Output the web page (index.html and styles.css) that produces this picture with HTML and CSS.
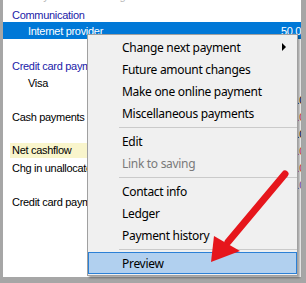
FILE: index.html
```html
<!DOCTYPE html>
<html lang="en">
<head>
  <meta charset="UTF-8">
  <title>Budget context menu</title>
  <link rel="stylesheet" href="styles.css">
</head>
<body>

<div class="frame">
  <div class="list">
    <div class="row cut"><span class="label">Monthly household budget</span></div>
    <div class="row group"><span class="label">Communication</span></div>
    <div class="row sub selected"><span class="label">Internet provider</span><span class="amt">50.00</span></div>
    <div class="row"></div>
    <div class="row group"><span class="label">Credit card payments</span></div>
    <div class="row sub"><span class="label">Visa</span></div>
    <div class="row"><span class="label"></span><span class="amt">1,200.00</span></div>
    <div class="row"><span class="label">Cash payments and withdrawals</span><span class="amt neg">-340.00</span></div>
    <div class="row"><span class="label"></span><span class="amt">310.00</span></div>
    <div class="row"><span class="label total">Net cashflow</span><span class="amt neg">-85.00</span></div>
    <div class="row"><span class="label">Chg in unallocated funds</span><span class="amt neg">-12.00</span></div>
    <div class="row"><span class="label"></span><span class="amt other">0.00</span></div>
    <div class="row"><span class="label">Credit card payments due</span></div>
    <div class="row"></div>
    <div class="row"></div>
    <div class="row"></div>
    <div class="row"></div>
  </div>

  <div class="menu">
    <div class="item">Change next payment<span class="sub-arrow"></span></div>
    <div class="item">Future amount changes</div>
    <div class="item">Make one online payment</div>
    <div class="item">Miscellaneous payments</div>
    <div class="sep"></div>
    <div class="item">Edit</div>
    <div class="item disabled">Link to saving</div>
    <div class="sep"></div>
    <div class="item">Contact info</div>
    <div class="item">Ledger</div>
    <div class="item">Payment history</div>
    <div class="sep"></div>
    <div class="item active">Preview</div>
  </div>

  <!-- red call-out arrow pointing at Preview -->
  <svg class="arrow" width="306" height="283" viewBox="0 0 306 283">
    <line x1="285" y1="174" x2="228" y2="242" stroke="#e6161c" stroke-width="7" stroke-linecap="round"/>
    <polygon points="211,262 214,236 240,251" fill="#e6161c"/>
  </svg>
</div>

</body>
</html>
```

FILE: styles.css
```css
body {
  margin: 0;
  background-color: #a6a6a6; /* window frame grey */
}

.frame {
  position: relative;
  width: 306px;
  height: 283px;
  overflow: hidden;
}

.list {
  width: 298px;
  height: 288px;
  margin-left: 3px;
  margin-top: -11px;
  background-color: #fff;
  overflow: hidden;
  font-family: "Liberation Sans", Arial, sans-serif;
  font-size: 11px;
  letter-spacing: -0.3px;
  color: #000;
}

.row {
  display: flex;
  justify-content: space-between;
  align-items: center;
  height: 17px;
  padding-left: 7px;
  white-space: nowrap;
}

.row .label {
  padding-left: 2px;
}

.row.cut {
  color: #b8b8b8;
  box-sizing: border-box;
  padding-bottom: 4px;
}

.row.group {
  color: #1b1ba8; /* dark blue group headers */
}

.row.sub .label {
  padding-left: 18px;
}

.row.selected {
  background-color: #0078d7;
  color: #fff;
  margin-top: -1px;
  margin-bottom: 1px;
}

.label.total {
  background-color: #f9f5cc; /* light yellow */
  padding-right: 90px;
  line-height: 15px;
}

.amt {
  margin-right: -10px;
}

.row.selected .amt {
  margin-right: -6px;
}

.amt.neg {
  color: #d9341c;
}

.amt.other {
  color: #7a4bb0;
}

.menu {
  position: absolute;
  left: 87px;
  top: 34px;
  width: 211px;
  box-sizing: border-box;
  padding: 1px 0;
  border: 1px solid #a0a0a0;
  background-color: #f0f0f0;
  box-shadow: 2px 2px 2px rgba(0, 0, 0, 0.35);
  font-family: "Noto Sans", sans-serif;
  font-size: 12px;
  letter-spacing: -0.3px;
  color: #000;
}

.item {
  display: flex;
  align-items: center;
  height: 22px;
  box-sizing: border-box;
  padding-left: 34px;
  white-space: nowrap;
}

.item.disabled {
  color: #7a7a7a;
}

.item.active {
  background-color: #b1d0ef;
  border: 1px solid #2b80d6;
  padding-left: 33px;
}

.sub-arrow {
  margin-left: auto;
  margin-right: 11px;
  width: 0;
  height: 0;
  border-left: 4px solid #000;
  border-top: 4px solid transparent;
  border-bottom: 4px solid transparent;
}

.sep {
  height: 6px;
  display: flex;
  align-items: center;
  padding-left: 31px;
}

.sep::after {
  content: "";
  flex-grow: 1;
  height: 1px;
  background-color: #cacaca;
}

.arrow {
  position: absolute;
  left: 0;
  top: 0;
  pointer-events: none;
}
```
